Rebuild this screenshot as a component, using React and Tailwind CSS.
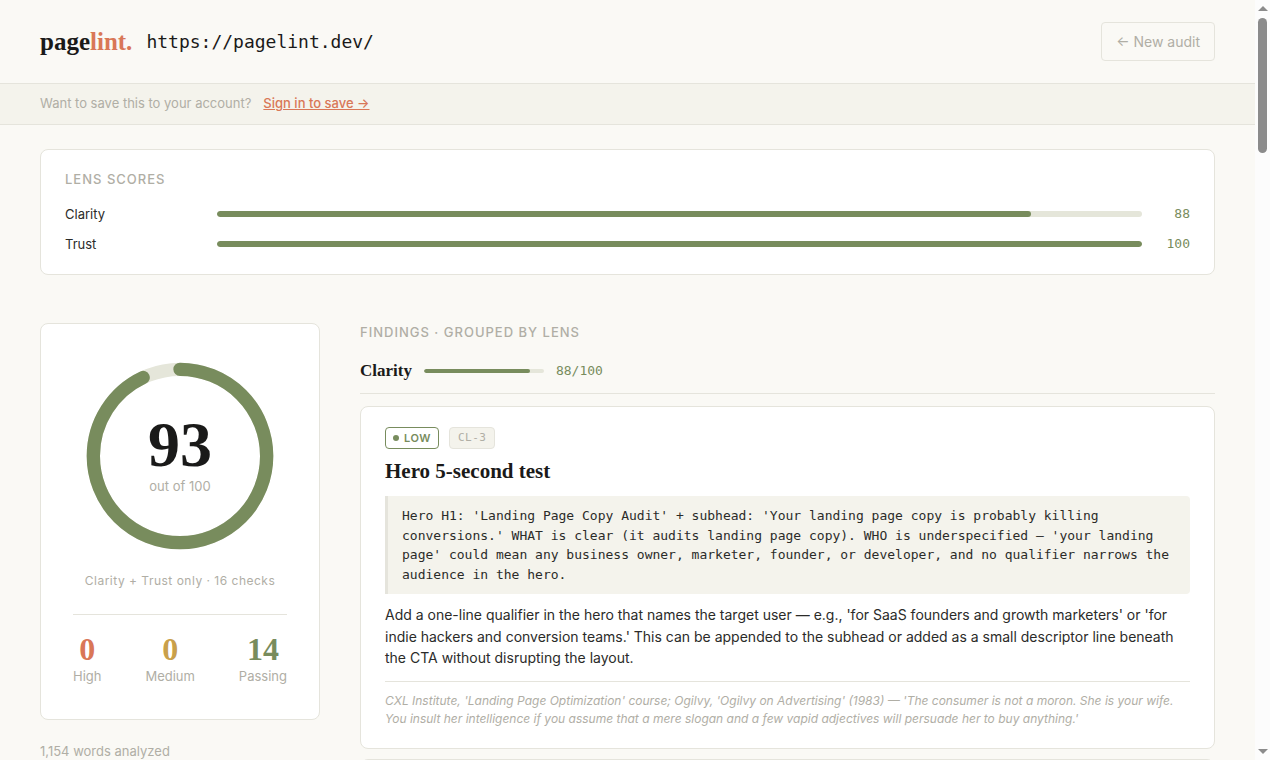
const lenses = [
  { name: "Clarity", score: 88 },
  { name: "Trust", score: 100 },
];

const counts = [
  { label: "High", value: 0, color: "text-[#d97757]" },
  { label: "Medium", value: 0, color: "text-[#c9a04a]" },
  { label: "Passing", value: 14, color: "text-[#788c5d]" },
];

const serif = "font-['Liberation_Serif',serif]";
const mono = "font-['DejaVu_Sans_Mono',monospace]";

function Header() {
  return (
    <header className="flex items-center justify-between px-10 py-[22px] border-b border-[#e5e4dc]">
      <div className="flex items-center gap-[14px]">
        <a href="#" className={`${serif} text-[25px] leading-8 font-bold`}>
          page<span className="text-[#d97757]">lint.</span>
        </a>
        <h1 className={`${mono} text-lg leading-6`}>https://pagelint.dev/</h1>
      </div>
      <button
        type="button"
        className="border border-[#e5e4dc] rounded px-[14px] py-2 text-sm leading-[21px] text-[#b0aea5] cursor-pointer"
      >
        ← New audit
      </button>
    </header>
  );
}

function SaveBanner() {
  return (
    <div className="flex items-center gap-3 px-10 pt-[10px] pb-3 bg-[#f4f3ec] border-b border-[#e5e4dc] text-[13px] leading-[18px]">
      <span className="text-[#b0aea5]">Want to save this to your account?</span>
      <a href="#" className="text-[#d97757] font-medium underline">
        Sign in to save →
      </a>
    </div>
  );
}

function LensScores() {
  return (
    <section className="bg-white border border-[#e5e4dc] rounded-lg px-6 pt-5 pb-5">
      <h2 className="text-[13px] leading-[18px] font-medium tracking-[1px] uppercase text-[#b0aea5] mb-4">
        Lens scores
      </h2>
      <div className="flex flex-col gap-[10px]">
        {lenses.map((lens) => (
          <div key={lens.name} className="flex items-center gap-3 text-[13px] leading-5">
            <span className="w-[140px] text-[#2b2b29]">{lens.name}</span>
            <div className="flex-1 h-[6px] rounded-full bg-[#e5e6da] overflow-hidden">
              <div className="h-full rounded-full bg-[#788c5d]" style={{ width: `${lens.score}%` }} />
            </div>
            <span className={`${mono} w-9 text-right text-[#788c5d]`}>{lens.score}</span>
          </div>
        ))}
      </div>
    </section>
  );
}

function ScoreRing({ score }) {
  return (
    <div className="grid place-items-center">
      <svg viewBox="0 0 150 150" className="col-start-1 row-start-1 size-[200px] -rotate-90">
        <circle cx="75" cy="75" r="65" fill="none" stroke="#e5e6da" strokeWidth="10" />
        <circle
          cx="75"
          cy="75"
          r="65"
          fill="none"
          stroke="#788c5d"
          strokeWidth="10"
          strokeLinecap="round"
          pathLength="100"
          strokeDasharray={`${score} 100`}
        />
      </svg>
      <div className="col-start-1 row-start-1 flex flex-col items-center">
        <span className={`${serif} text-[64px] leading-[56px] font-bold`}>{score}</span>
        <span className="text-[13px] leading-[18px] text-[#b0aea5] mt-1">out of 100</span>
      </div>
    </div>
  );
}

function Summary() {
  return (
    <aside className="w-[280px] shrink-0">
      <div className="bg-white border border-[#e5e4dc] rounded-lg p-8">
        <ScoreRing score={93} />
        <p className="mt-[15px] text-center text-xs leading-5 tracking-[0.5px] text-[#b0aea5]">
          Clarity + Trust only · 16 checks
        </p>
        <div className="mt-[23px] pt-5 pb-[2px] border-t border-[#e5e4dc] flex justify-between">
          {counts.map((c) => (
            <div key={c.label} className="text-center">
              <div className={`${serif} ${c.color} text-[32px] leading-7 font-bold mb-1`}>{c.value}</div>
              <div className="text-[13px] leading-[18px] text-[#b0aea5]">{c.label}</div>
            </div>
          ))}
        </div>
      </div>
      <p className="mt-[22px] text-[13px] leading-[18px] text-[#b0aea5]">1,154 words analyzed</p>
    </aside>
  );
}

function Findings() {
  return (
    <section className="flex-1 min-w-0">
      <h2 className="text-[13px] leading-[18px] font-medium tracking-[1px] uppercase text-[#b0aea5]">
        Findings · Grouped by lens
      </h2>
      <div className="flex items-center gap-3 mt-[18px] pb-[10px] border-b border-[#e5e4dc]">
        <h3 className={`${serif} text-[17px] leading-6 font-bold`}>Clarity</h3>
        <div className="w-[120px] h-1 rounded-full bg-[#e5e6da] overflow-hidden">
          <div className="h-full rounded-full bg-[#788c5d]" style={{ width: "88%" }} />
        </div>
        <span className={`${mono} text-[13px] leading-5 text-[#788c5d]`}>88/100</span>
      </div>

      <article className="mt-3 bg-white border border-[#e5e4dc] rounded-lg px-6 py-5">
        <div className="flex items-center gap-[10px]">
          <span className="flex items-center gap-[5px] h-[22px] px-[7px] border border-[#788c5d] rounded text-[11px] font-semibold tracking-[0.5px] text-[#788c5d]">
            <span className="size-[6px] rounded-full bg-[#788c5d]" />
            LOW
          </span>
          <span
            className={`${mono} flex items-center h-[22px] px-2 border border-[#e5e4dc] rounded bg-[#f4f3ec] text-[11px] tracking-[0.5px] text-[#b0aea5]`}
          >
            CL-3
          </span>
        </div>
        <h4 className={`${serif} mt-[9px] text-[21px] leading-[26px] font-bold`}>Hero 5-second test</h4>
        <blockquote
          className={`${mono} mt-3 px-[14px] py-[10px] border-l-3 border-[#e5e4dc] rounded-r bg-[#f4f3ec] text-[13px] leading-normal text-[#2b2b29]`}
        >
          Hero H1: 'Landing Page Copy Audit' + subhead: 'Your landing page copy is probably killing
          conversions.' WHAT is clear (it audits landing page copy). WHO is underspecified — 'your landing page'
          could mean any business owner, marketer, founder, or developer, and no qualifier narrows the audience in
          the hero.
        </blockquote>
        <p className="mt-[10px] text-sm leading-[1.55] text-[#2b2b29]">
          Add a one-line qualifier in the hero that names the target user — e.g., 'for SaaS founders and growth
          marketers' or 'for indie hackers and conversion teams.' This can be appended to the subhead or added as
          a small descriptor line beneath the CTA without disrupting the layout.
        </p>
        <p className="mt-3 pt-[10px] border-t border-[#e5e4dc] text-xs leading-[18px] italic text-[#b0aea5]">
          CXL Institute, 'Landing Page Optimization' course; Ogilvy, 'Ogilvy on Advertising' (1983) — 'The
          consumer is not a moron. She is your wife. You insult her intelligence if you assume that a mere slogan
          and a few vapid adjectives will persuade her to buy anything.'
        </p>
      </article>

      <article className="mt-[10px] h-40 bg-white border border-[#e5e4dc] rounded-lg" />
    </section>
  );
}

function Scrollbar() {
  return (
    <div className="w-[15px] shrink-0 flex flex-col items-center bg-[#fcfcfc] py-[6px]" aria-hidden="true">
      <svg viewBox="0 0 10 5" className="w-[10px] h-[5px]" fill="#8b8b8b">
        <path d="M5 0 10 5H0z" />
      </svg>
      <div className="mt-[7px] w-[9px] h-[135px] rounded-full bg-[#8b8b8b]" />
      <svg viewBox="0 0 10 5" className="mt-auto w-[10px] h-[5px]" fill="#8b8b8b">
        <path d="M5 5 10 0H0z" />
      </svg>
    </div>
  );
}

export default function App() {
  return (
    <div className="flex h-screen overflow-hidden bg-[#faf9f5] text-[#1a1a19] font-['Inter',sans-serif]">
      <div className="flex-1 min-w-0">
        <Header />
        <SaveBanner />
        <main className="px-10 pt-6">
          <LensScores />
          <div className="mt-12 flex items-start gap-10">
            <Summary />
            <Findings />
          </div>
        </main>
      </div>
      <Scrollbar />
    </div>
  );
}
